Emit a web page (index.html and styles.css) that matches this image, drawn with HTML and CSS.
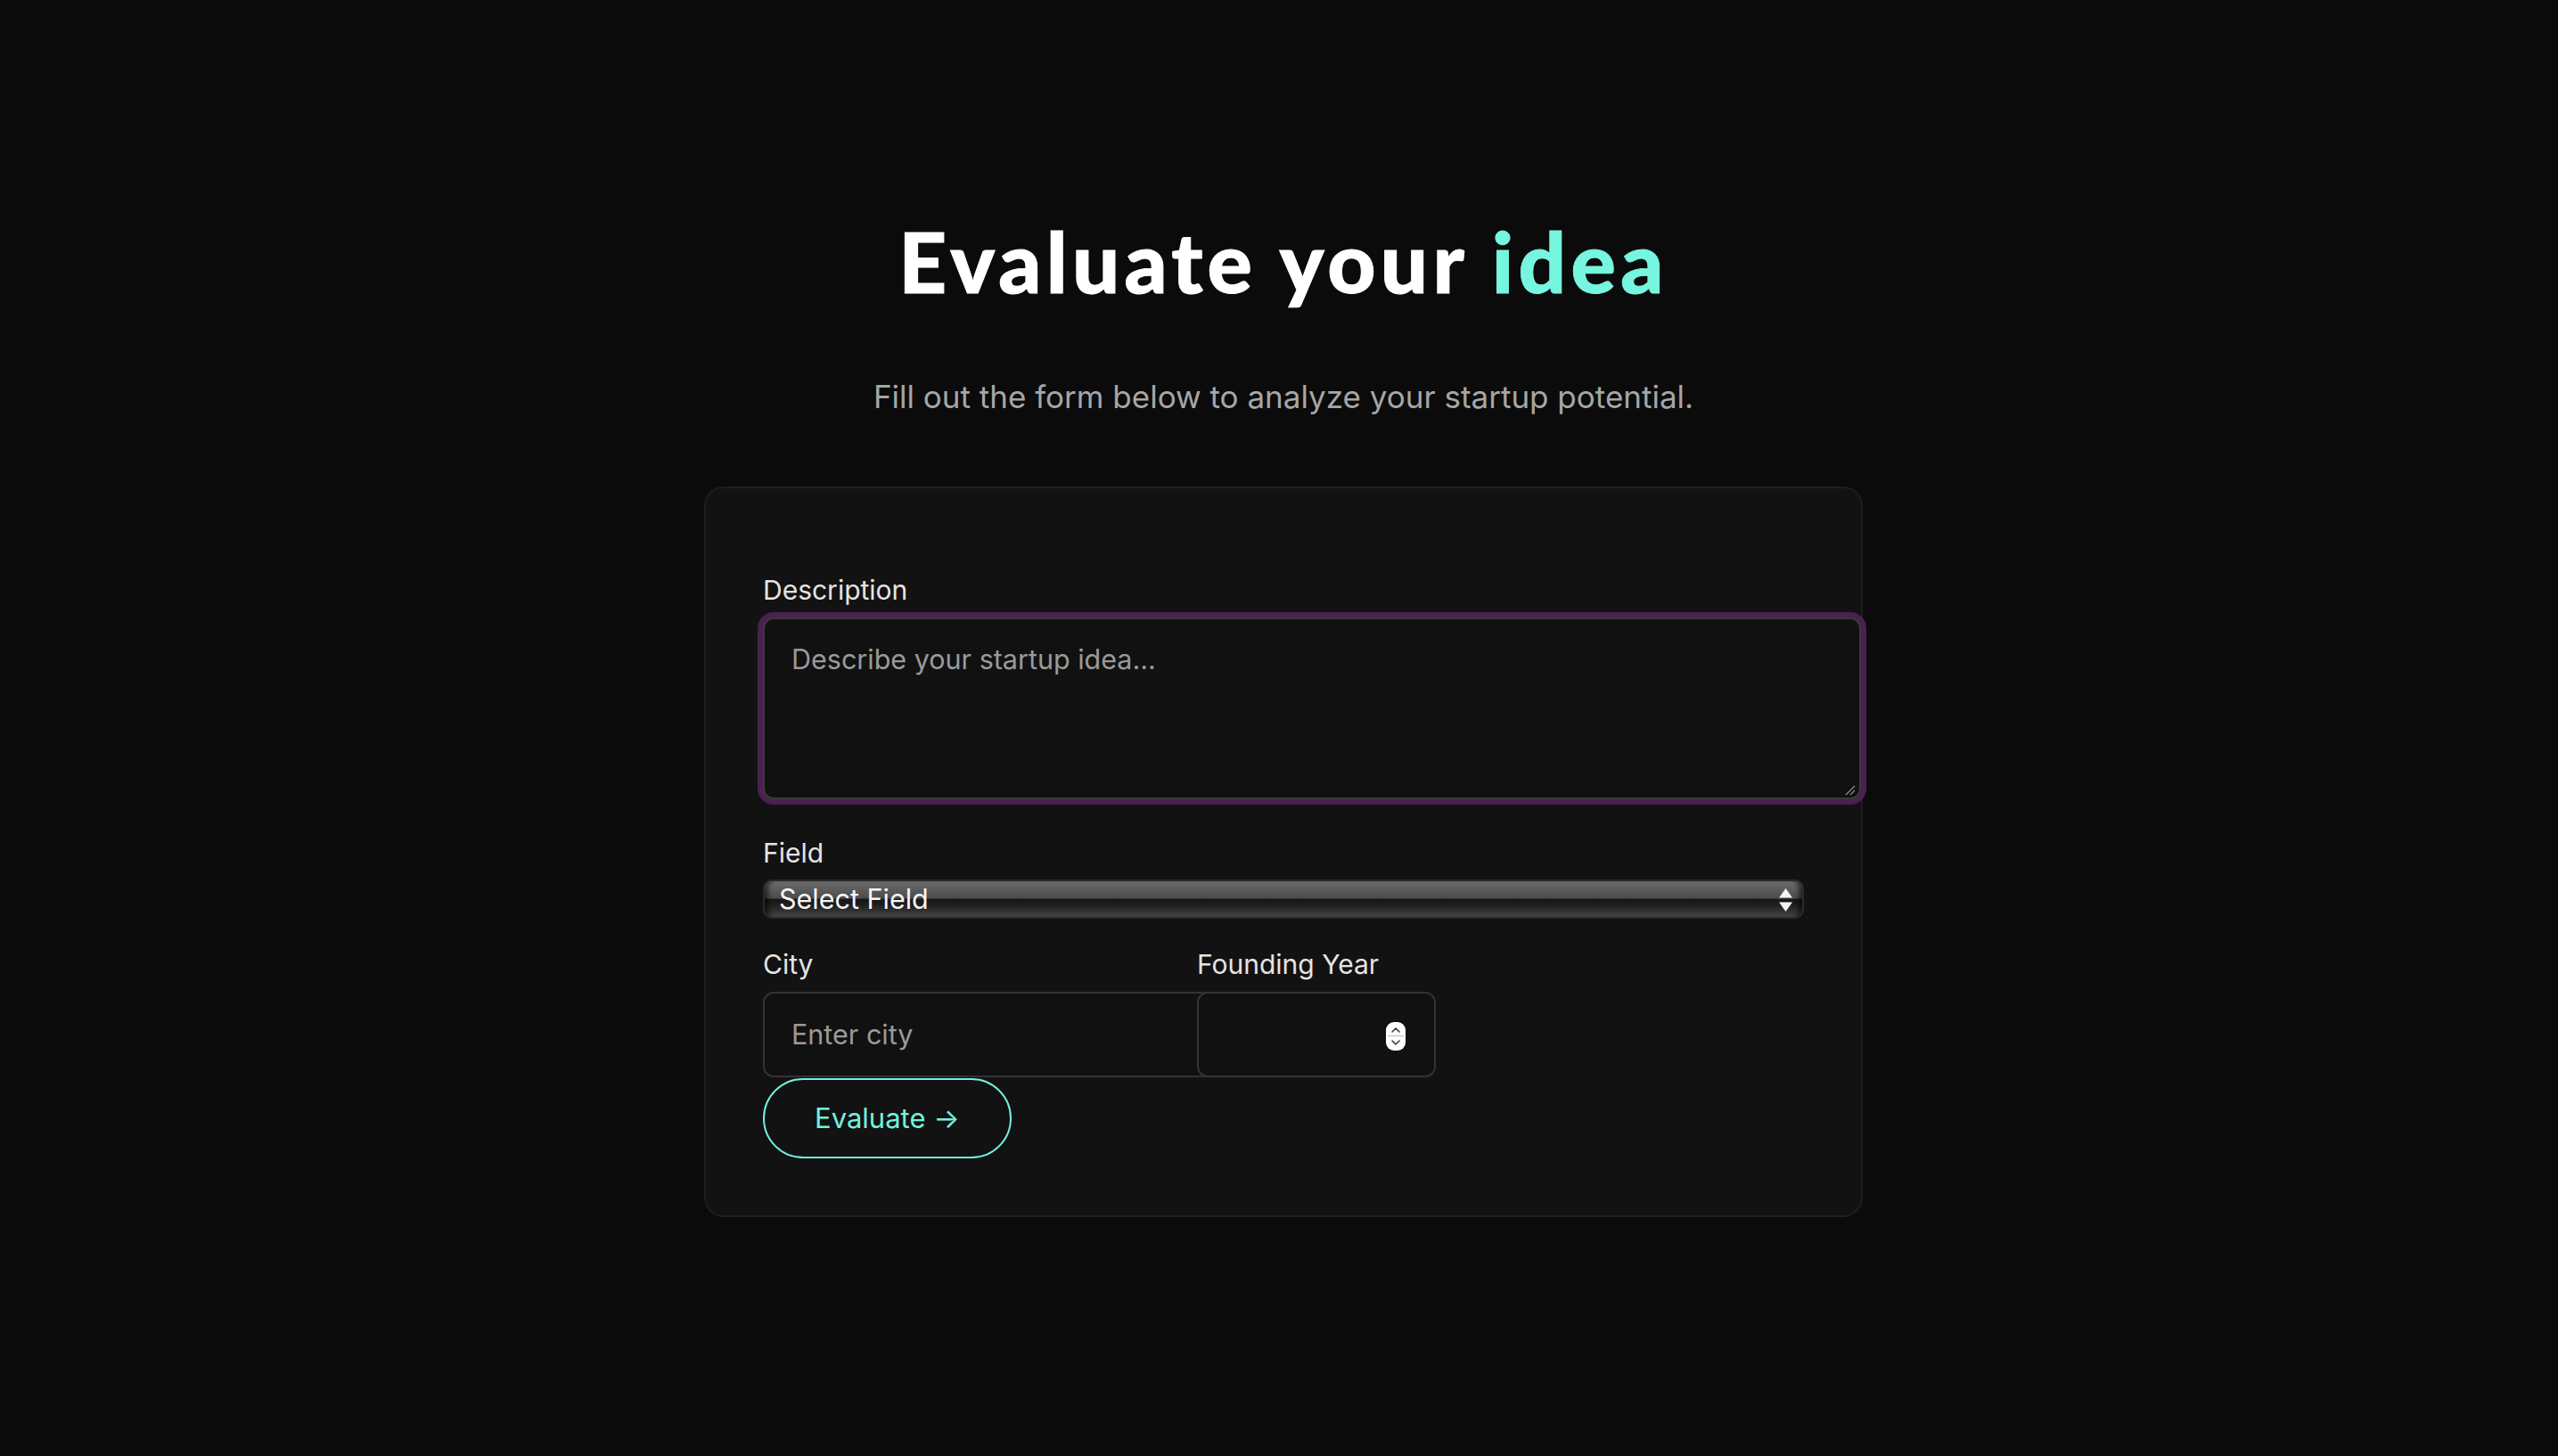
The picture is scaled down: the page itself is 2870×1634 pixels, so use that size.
FILE: index.html
```html
<!DOCTYPE html>
<html lang="en">
<head>
<meta charset="utf-8">
<title>Evaluate your idea</title>
<link rel="stylesheet" href="styles.css">
</head>
<body>
<main class="page">
  <h1 class="title">Evaluate your <span class="accent">idea</span></h1>
  <p class="subtitle">Fill out the form below to analyze your startup potential.</p>
  <form class="card">
    <div class="group group-desc">
      <label class="label" for="desc">Description</label>
      <div class="textarea-wrap">
        <textarea id="desc" class="textarea" placeholder="Describe your startup idea..." autofocus></textarea>
        <svg class="grip" viewBox="0 0 12 12" aria-hidden="true">
          <line x1="1" y1="11" x2="11" y2="1" stroke="#8a8a8a" stroke-width="1.2"/>
          <line x1="6" y1="11" x2="11" y2="6" stroke="#8a8a8a" stroke-width="1.2"/>
        </svg>
      </div>
    </div>
    <div class="group group-field">
      <label class="label" for="field">Field</label>
      <div class="select-wrap">
        <select id="field" class="select">
          <option>Select Field</option>
        </select>
        <svg class="select-arrows" viewBox="0 0 15 26" aria-hidden="true">
          <polygon points="7.5,0 15,10.5 0,10.5" fill="#f2f2f2"/>
          <polygon points="0,15.5 15,15.5 7.5,26" fill="#f2f2f2"/>
        </svg>
      </div>
    </div>
    <div class="row">
      <div class="col col-city">
        <label class="label" for="city">City</label>
        <input id="city" class="input input-city" type="text" placeholder="Enter city">
      </div>
      <div class="col col-year">
        <label class="label" for="year">Founding Year</label>
        <div class="year-wrap">
          <input id="year" class="input input-year" type="number">
          <svg class="spinner" viewBox="0 0 22 32" aria-hidden="true">
            <rect x="0" y="0" width="22" height="32" rx="9" fill="#ffffff"/>
            <line x1="2" y1="15.5" x2="20" y2="15.5" stroke="#c8c8c8" stroke-width="1.5"/>
            <polyline points="7,11 11,7 15,11" fill="none" stroke="#3a3a3a" stroke-width="1.6" stroke-linecap="round" stroke-linejoin="round"/>
            <polyline points="7,21 11,25 15,21" fill="none" stroke="#3a3a3a" stroke-width="1.6" stroke-linecap="round" stroke-linejoin="round"/>
          </svg>
        </div>
      </div>
    </div>
    <button class="btn" type="button">Evaluate →</button>
  </form>
</main>
</body>
</html>
```

FILE: styles.css
```css
html, body {
  margin: 0;
  background: #0b0b0b;
}

body {
  font-family: Inter, "Noto Sans", sans-serif;
  color: #e6e6e6;
}

.page {
  box-sizing: border-box;
  min-height: 1634px;
  padding: 238px 0 0 10px;
  display: flex;
  flex-direction: column;
  align-items: center;
}

.title {
  margin: 0;
  font-family: Lato, "Noto Sans", sans-serif;
  font-weight: 900;
  font-size: 94px;
  line-height: 110px;
  letter-spacing: 5.3px;
  color: #ffffff;
  -webkit-text-stroke: 1px #ffffff;
}

.accent {
  color: #76f5df;
  -webkit-text-stroke: 1px #76f5df;
}

.subtitle {
  margin: 71px 0 0;
  font-size: 35px;
  line-height: 52px;
  color: #a6a6a6;
}

.card {
  box-sizing: border-box;
  width: 1300px;
  margin-top: 75px;
  padding: 93px 64px 64px;
  background: #121212;
  border: 2px solid #1f1f1f;
  border-radius: 22px;
}

.label {
  display: block;
  margin-bottom: 8px;
  font-size: 30px;
  line-height: 43.5px;
  color: #e4e4e4;
}

.group-desc {
  margin-bottom: 39px;
}

.group-field {
  margin-bottom: 30px;
}

.textarea-wrap {
  position: relative;
}

.textarea {
  display: block;
  box-sizing: content-box;
  width: 100%;
  height: 156px;
  margin: 0;
  padding: 22px 30px;
  border: 2px solid #3a3a3a;
  border-radius: 12px;
  background: #111111;
  color: #eeeeee;
  font-family: Inter, "Noto Sans", sans-serif;
  font-size: 30.5px;
  line-height: 45px;
  box-shadow: 0 0 0 6px #4a2150;
  outline: none;
  resize: none;
  caret-color: #bbbbbb;
}

.grip {
  position: absolute;
  right: -58px;
  bottom: 4px;
  width: 12px;
  height: 12px;
  pointer-events: none;
}

.textarea::placeholder,
.input::placeholder {
  color: #9a9a9a;
}

.select-wrap {
  position: relative;
}

.select {
  appearance: none;
  -webkit-appearance: none;
  display: block;
  box-sizing: border-box;
  width: 100%;
  height: 44px;
  margin: 0;
  padding: 0 16px;
  border: 2px solid #2a2a2a;
  border-radius: 10px;
  color: #f5f5f5;
  font-family: Inter, "Noto Sans", sans-serif;
  font-size: 30.5px;
  line-height: 40px;
  background: linear-gradient(to bottom,
    #6d6d6d 0%,
    #5b5b5b 25%,
    #4b4b4b 48%,
    #161616 50%,
    #1d1d1d 65%,
    #363636 88%,
    #4a4a4a 100%);
  box-shadow: inset 7px 0 5px -3px rgba(0, 0, 0, 0.55), inset -7px 0 5px -3px rgba(0, 0, 0, 0.55);
  outline: none;
}

.select-arrows {
  position: absolute;
  right: 13px;
  top: 10px;
  width: 15px;
  height: 26px;
  pointer-events: none;
}

.row {
  display: grid;
  grid-template-columns: 487px 268px;
}

.input {
  display: block;
  margin: 0;
  padding: 28px 30px;
  border: 2px solid #333333;
  border-radius: 12px;
  background: #111111;
  color: #eeeeee;
  font-family: Inter, "Noto Sans", sans-serif;
  font-size: 30.5px;
  line-height: 36px;
  height: 36px;
  outline: none;
}

.input-city {
  box-sizing: content-box;
  width: 100%;
}

.year-wrap {
  position: relative;
}

.input-year {
  box-sizing: border-box;
  width: 100%;
  height: 96px;
  appearance: textfield;
  -moz-appearance: textfield;
}

.input-year::-webkit-inner-spin-button,
.input-year::-webkit-outer-spin-button {
  -webkit-appearance: none;
  margin: 0;
}

.spinner {
  position: absolute;
  right: 34px;
  top: 34px;
  width: 22px;
  height: 32px;
  pointer-events: none;
}

.btn {
  display: block;
  margin-top: 1px;
  padding: 24px 56px;
  border: 2px solid #72f2dc;
  border-radius: 999px;
  background: transparent;
  color: #72f2dc;
  font-family: Inter, "Noto Sans", sans-serif;
  font-size: 31px;
  line-height: 38px;
  cursor: pointer;
}
```
